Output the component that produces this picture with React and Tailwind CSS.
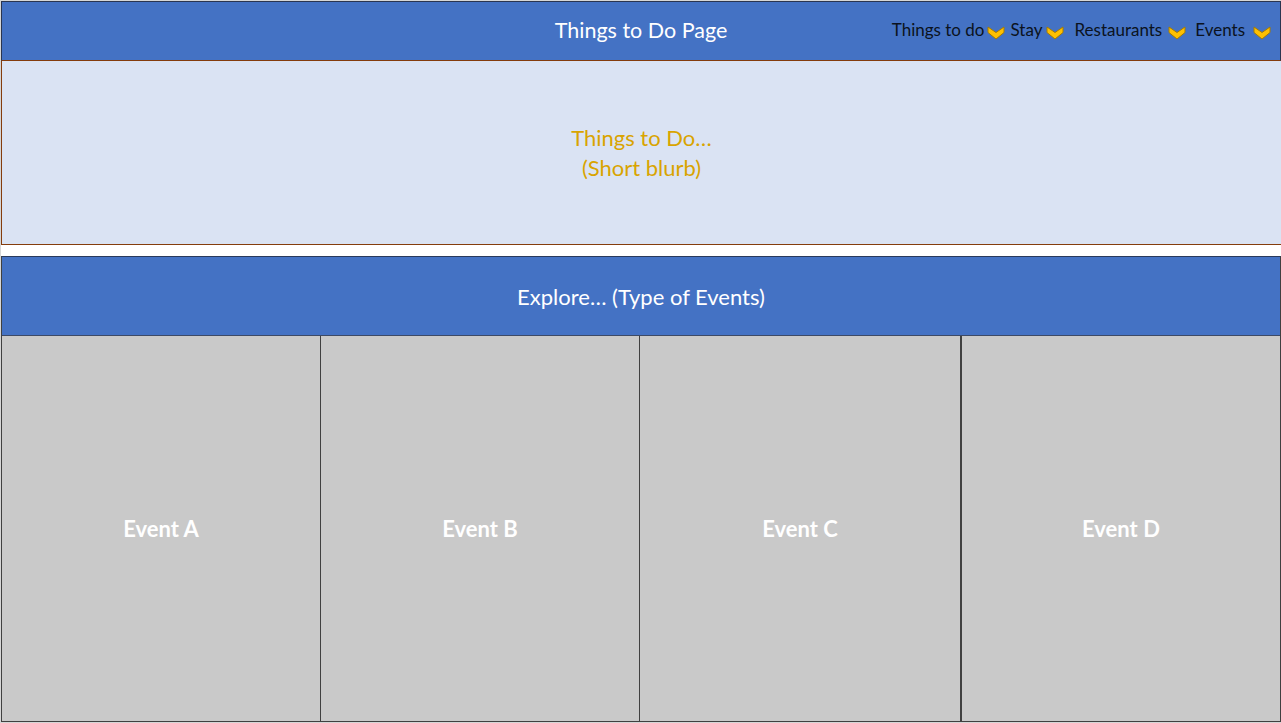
import React from "react";

function Chevron() {
  return (
    <svg width="18" height="15" viewBox="0 0 18 15" className="inline-block shrink-0">
      <polygon points="1,2 9,7.5 17,2 17,7.5 9,14 1,7.5" fill="#FFC000" stroke="#A67C00" strokeWidth="1" strokeLinejoin="round" />
    </svg>
  );
}

const font = { fontFamily: '"Lato", "Open Sans", "Liberation Sans", sans-serif' };

export default function App() {
  return (
    <div className="w-[1281px] h-[723px] bg-[#d6d6d6] pl-px py-px flex flex-col" style={font}>
      {/* Header */}
      <div className="relative h-[60px] bg-[#4472C4] border border-b-[#843C0C] border-t-[#2a3550] border-l-[#2a3550] border-r-[#2a3550] flex items-center justify-center">
        <span className="text-white text-[21.5px] leading-none">Things to Do Page</span>
        <nav className="absolute right-[9px] top-[17px] flex items-center text-[17px] leading-none text-[#0b1220]">
          <span>Things to do</span>
          <span className="ml-[2px] mt-[3px]"><Chevron /></span>
          <span className="ml-[6px]">Stay</span>
          <span className="ml-[4px] mt-[3px]"><Chevron /></span>
          <span className="ml-[10px]">Restaurants</span>
          <span className="ml-[6px] mt-[3px]"><Chevron /></span>
          <span className="ml-[9px]">Events</span>
          <span className="ml-[8px] mt-[3px]"><Chevron /></span>
        </nav>
      </div>

      {/* Hero */}
      <div className="h-[184px] bg-[#DAE3F3] border-l border-b border-[#843C0C] flex flex-col items-center justify-center text-[#D9A400] text-[22px] leading-[30px]">
        <span>Things to Do…</span>
        <span>(Short blurb)</span>
      </div>

      <div className="h-[11px] bg-white" />

      {/* Explore */}
      <div className="flex flex-col flex-1 border border-[#2a3a5c] border-b-[#404040] border-l-[#404040] border-r-[#404040]">
        <div className="h-[79px] bg-[#4472C4] border-b border-[#3d4a66] flex items-center justify-center text-white text-[22px]">
          Explore… (Type of Events)
        </div>
        <div className="flex flex-1 bg-[#C9C9C9]">
          <div className="w-[319px] flex items-center justify-center text-white font-bold text-[22px] border-r border-[#404040]">Event A</div>
          <div className="w-[319px] flex items-center justify-center text-white font-bold text-[22px] border-r border-[#404040]">Event B</div>
          <div className="w-[322px] flex items-center justify-center text-white font-bold text-[22px] border-r-2 border-[#404040]">Event C</div>
          <div className="flex-1 flex items-center justify-center text-white font-bold text-[22px]">Event D</div>
        </div>
      </div>
    </div>
  );
}
